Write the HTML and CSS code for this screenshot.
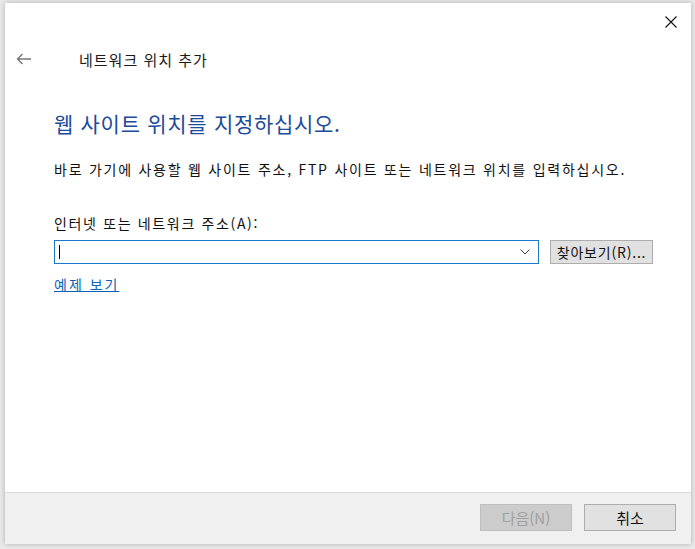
FILE: index.html
```html
<!DOCTYPE html>
<html lang="ko">
<head>
  <meta charset="UTF-8">
  <title>네트워크 위치 추가</title>
  <link rel="stylesheet" href="styles.css">
</head>
<body>

  <div class="dialog">
    <!-- Title bar with close button -->
    <div class="titlebar">
      <span class="close">
        <svg width="12" height="12" viewBox="0 0 12 12"><path d="M0.5 0.5 L11.5 11.5 M11.5 0.5 L0.5 11.5" stroke="#111" stroke-width="1.1" fill="none"/></svg>
      </span>
    </div>

    <!-- Wizard header -->
    <div class="wizard-head">
      <span class="back">
        <svg width="16" height="12" viewBox="0 0 16 12"><path d="M15 6 H1.5 M6.5 1 L1.5 6 L6.5 11" stroke="#777" stroke-width="1.4" fill="none"/></svg>
      </span>
      <span class="wizard-title">네트워크 위치 추가</span>
    </div>

    <div class="content">
      <h1 class="heading">웹 사이트 위치를 지정하십시오.</h1>
      <p class="desc">바로 가기에 사용할 웹 사이트 주소, FTP 사이트 또는 네트워크 위치를 입력하십시오.</p>

      <label class="field-label">인터넷 또는 네트워크 주소(A):</label>
      <div class="field-row">
        <div class="combo">
          <span class="caret"></span>
          <svg class="chevron" width="10" height="6" viewBox="0 0 10 6"><path d="M0.5 0.5 L5 5 L9.5 0.5" stroke="#444" stroke-width="1" fill="none"/></svg>
        </div>
        <button class="btn browse">찾아보기(R)...</button>
      </div>

      <a class="link" href="#">예제 보기</a>
    </div>

    <!-- Footer buttons -->
    <div class="footer">
      <button class="btn footer-btn" disabled>다음(N)</button>
      <button class="btn footer-btn">취소</button>
    </div>
  </div>

</body>
</html>
```

FILE: styles.css
```css
body {
  margin: 0;
  width: 695px;
  height: 549px;
  background-color: #e9e9e9;
  font-family: 'Noto Sans CJK KR', 'Noto Sans', sans-serif;
  overflow: hidden;
}

.dialog {
  margin: 3px 0 0 5px;
  width: 686px;
  height: 541px;
  background-color: #ffffff;
  box-shadow: 0 0 5px rgba(0, 0, 0, 0.25);
  display: flex;
  flex-direction: column;
}

.titlebar {
  height: 36px;
  display: flex;
  justify-content: flex-end;
  align-items: center;
  padding-right: 14px;
}

.close {
  display: flex;
  margin-top: 2px;
}

.wizard-head {
  display: flex;
  align-items: center;
  height: 40px;
  padding-left: 11px;
}

.back {
  display: flex;
  width: 63px;
}

.wizard-title {
  font-size: 15px;
  letter-spacing: 1px;
  color: #1a1a1a;
}

.content {
  flex: 1;
  padding: 30px 0 0 49px;
}

.heading {
  margin: 0;
  font-size: 21px;
  font-weight: normal;
  letter-spacing: 0.7px;
  color: #1b4b9b;
  line-height: 28px;
}

.desc {
  margin: 22px 0 0;
  font-size: 14px;
  color: #111;
  line-height: 20px;
  letter-spacing: 1.75px;
}

.field-label {
  display: block;
  margin-top: 34px;
  font-size: 14px;
  color: #111;
  line-height: 20px;
  letter-spacing: 1.65px;
}

.field-row {
  display: flex;
  align-items: center;
  gap: 11px;
  margin-top: 7px;
}

.combo {
  height: 22px;
  border: 1px solid #1979ca;
  display: flex;
  align-items: center;
  justify-content: space-between;
  padding: 0 8px 0 4px;
  box-sizing: content-box;
  width: 471px;
}

.caret {
  width: 1px;
  height: 14px;
  background-color: #000;
}

.btn {
  font-family: 'Noto Sans CJK KR', 'Noto Sans', sans-serif;
  background-color: #e1e1e1;
  border: 1px solid #adadad;
  color: #111;
  padding: 0;
}

.browse {
  width: 103px;
  height: 24px;
  font-size: 14px;
  line-height: 20px;
  letter-spacing: 0.8px;
}

.link {
  display: inline-block;
  margin-top: 10px;
  font-size: 14px;
  letter-spacing: 2px;
  color: #0a64b4;
  text-decoration: underline;
}

.footer {
  box-sizing: border-box;
  height: 52px;
  border-top: 1px solid #dcdcdc;
  background-color: #f0f0f0;
  display: flex;
  justify-content: flex-end;
  align-items: flex-start;
  gap: 12px;
  padding: 11px 15px 0 0;
}

.footer-btn {
  width: 92px;
  height: 27px;
  font-size: 15px;
}

.footer-btn:disabled {
  color: #a0a0a0;
  background-color: #cccccc;
  border-color: #bfbfbf;
}
```
